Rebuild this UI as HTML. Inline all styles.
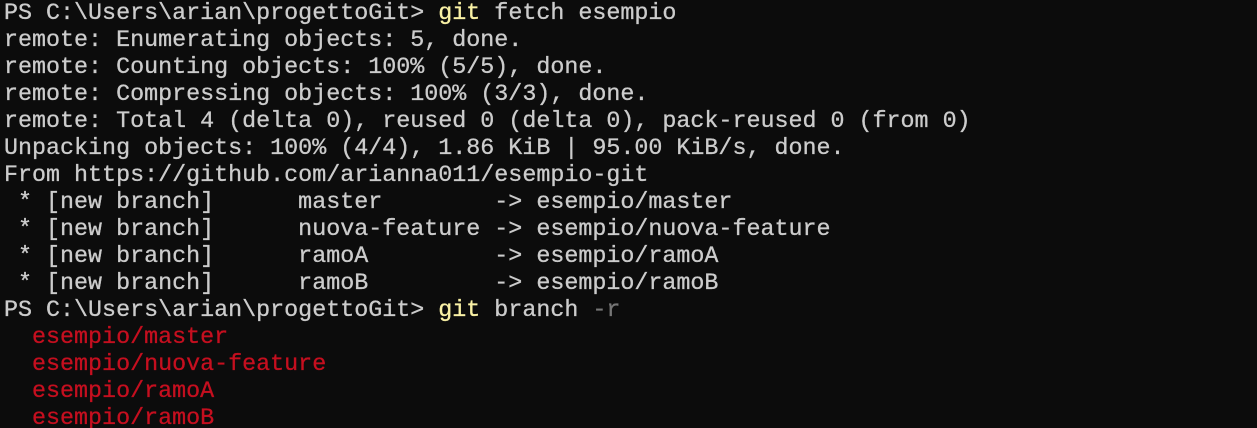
<!DOCTYPE html>
<html><head><meta charset="utf-8"><style>
html,body{margin:0;padding:0;background:#0c0c0c;width:1257px;height:428px;overflow:hidden}
pre{margin:0;padding:0 0 0 4px;font-family:"Liberation Mono",monospace;font-size:23.35px;line-height:27px;color:#cccccc;position:relative;top:1px;white-space:pre;-webkit-text-stroke:0.3px currentColor}
.y{color:#f9f1a5}.g{color:#767676}.r{color:#c50f1f}
</style></head><body><pre>PS C:\Users\arian\progettoGit&gt; <span class="y">git</span> fetch esempio
remote: Enumerating objects: 5, done.
remote: Counting objects: 100% (5/5), done.
remote: Compressing objects: 100% (3/3), done.
remote: Total 4 (delta 0), reused 0 (delta 0), pack-reused 0 (from 0)
Unpacking objects: 100% (4/4), 1.86 KiB | 95.00 KiB/s, done.
From https://github.com/arianna011/esempio-git
 * [new branch]      master        -&gt; esempio/master
 * [new branch]      nuova-feature -&gt; esempio/nuova-feature
 * [new branch]      ramoA         -&gt; esempio/ramoA
 * [new branch]      ramoB         -&gt; esempio/ramoB
PS C:\Users\arian\progettoGit&gt; <span class="y">git</span> branch <span class="g">-r</span>
<span class="r">  esempio/master
  esempio/nuova-feature
  esempio/ramoA
  esempio/ramoB</span></pre></body></html>
